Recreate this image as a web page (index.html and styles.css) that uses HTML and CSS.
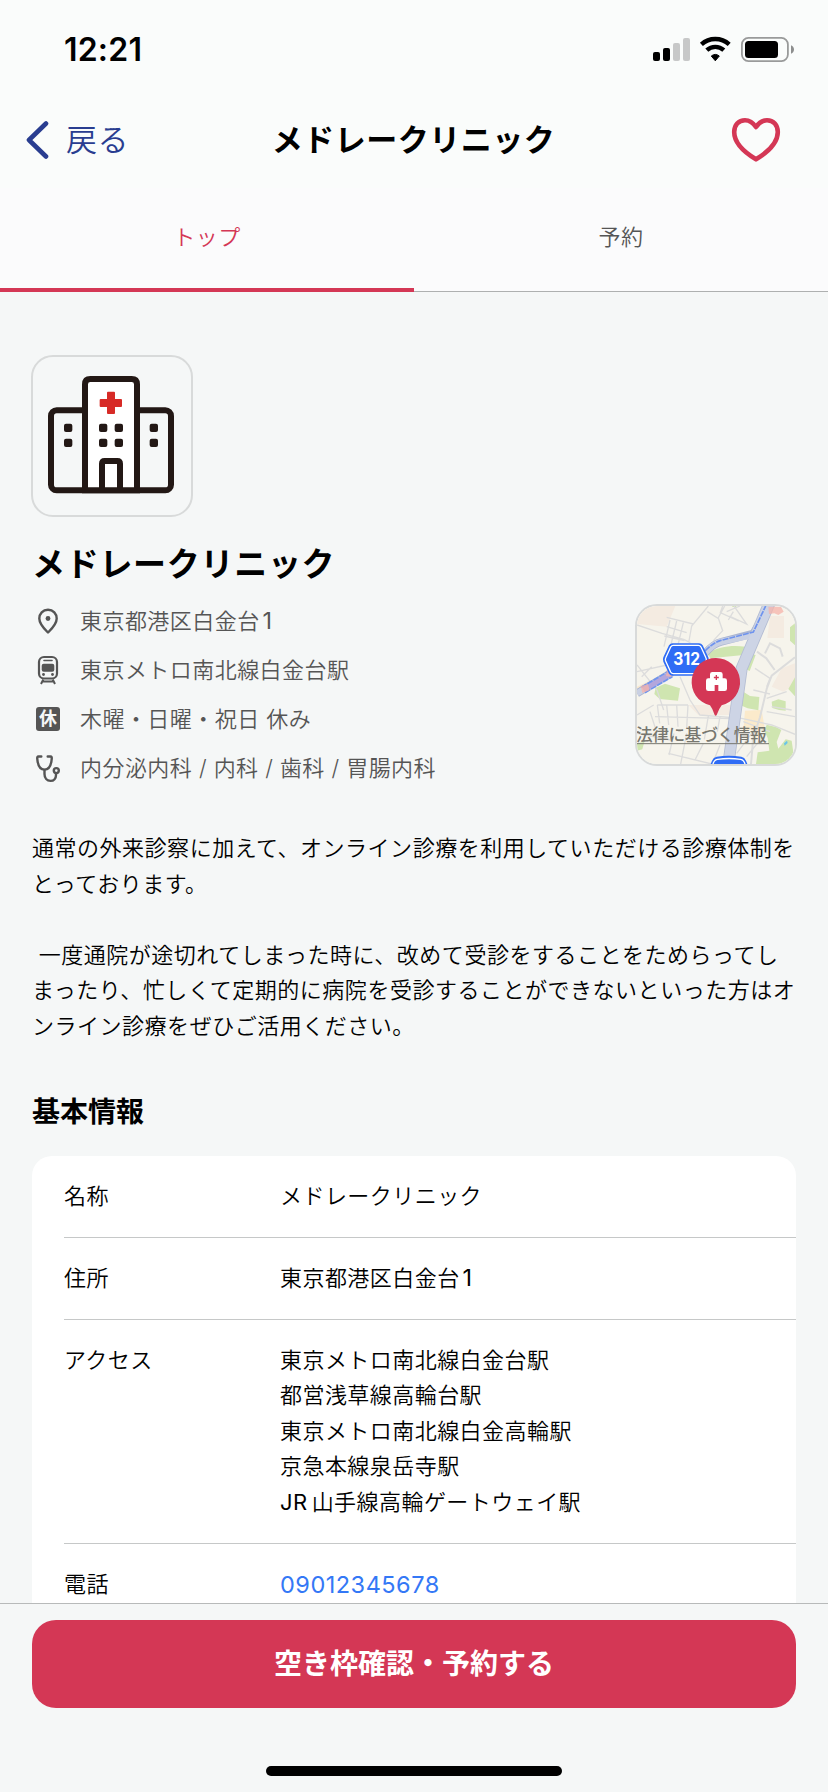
FILE: index.html
```html
<!DOCTYPE html>
<html lang="ja">
<head>
<meta charset="utf-8">
<title>メドレークリニック</title>
<link rel="stylesheet" href="styles.css">
</head>
<body>
<div class="screen">
  <header class="top">
    <div class="status">
      <span class="time">12:21</span>
      <svg class="status-icons" viewBox="0 0 144 28" width="144" height="28">
        <rect x="1" y="16" width="7" height="9" rx="2"/>
        <rect x="11" y="12" width="7" height="13" rx="2"/>
        <rect x="21" y="7" width="7" height="18" rx="2" fill="#c7c8c8"/>
        <rect x="31" y="2" width="7" height="23" rx="2" fill="#c7c8c8"/>
        <g fill="none" stroke="#000" stroke-width="4.400">
          <path d="M49.400 8.400a20.600 20.600 0 0 1 27.800 0"/>
          <path d="M54.800 14.200a12.600 12.600 0 0 1 17 0"/>
        </g>
        <path d="M59.300 20q4-3.200 8 0l-4 4.800z" stroke="#000" stroke-width="1" stroke-linejoin="round"/>
        <rect x="89.900" y="1.900" width="46" height="23.200" rx="6.500" fill="none" stroke="#999a9a" stroke-width="1.800"/>
        <rect x="93" y="5" width="33" height="17" rx="3.500"/>
        <path d="M139 9.200q3 1.400 3 4.300t-3 4.300z" fill="#8d8e8e"/>
      </svg>
    </div>
    <nav class="nav">
      <a class="back">
        <svg viewBox="0 0 24 40" width="24" height="40"><path d="M20 3.500 3 20l17 16.500" fill="none" stroke="#293d90" stroke-width="4.600" stroke-linecap="round" stroke-linejoin="round"/></svg>
        <span>戻る</span>
      </a>
      <h1 class="nav-title">メドレークリニック</h1>
      <svg class="heart" viewBox="0 0 50 46" width="50" height="46"><path d="M25 10C21.500 4.800 17.800 3.200 14 3.200 7.500 3.200 3.200 8.200 3.200 15c0 12 13 22 21.800 27.300C33.800 37 46.800 27 46.800 15 46.800 8.200 42.500 3.200 36 3.200c-3.800 0-7.500 1.600-11 6.800z" fill="none" stroke="#d43755" stroke-width="4.600" stroke-linejoin="round"/></svg>
    </nav>
    <div class="tabs">
      <div class="tab tab-active">トップ</div>
      <div class="tab">予約</div>
    </div>
  </header>

  <main class="content">
    <div class="logo">
      <svg viewBox="39 51 474 474" width="158" height="158">
        <g fill="none" stroke="#231815" stroke-width="18">
          <rect x="93" y="211" width="360" height="240" rx="17"/>
          <path d="M195 451V133q0-16 16-16h124q16 0 16 16v318z" fill="#fff"/>
          <path d="M246 450v-79q0-8 8-8h38q8 0 8 8v79"/>
        </g>
        <g fill="#231815">
          <rect x="132" y="251" width="25" height="25" rx="6"/><rect x="132" y="296" width="25" height="25" rx="6"/>
          <rect x="237" y="251" width="25" height="25" rx="6"/><rect x="237" y="296" width="25" height="25" rx="6"/>
          <rect x="284" y="251" width="25" height="25" rx="6"/><rect x="284" y="296" width="25" height="25" rx="6"/>
          <rect x="389" y="251" width="25" height="25" rx="6"/><rect x="389" y="296" width="25" height="25" rx="6"/>
        </g>
        <g fill="#d72a26"><rect x="261" y="155" width="24" height="67" rx="3"/><rect x="239" y="177" width="67" height="24" rx="3"/></g>
      </svg>
    </div>
    <h2 class="clinic-name">メドレークリニック</h2>

    <section class="summary">
      <ul class="facts">
        <li>
          <svg viewBox="0 0 30 30" width="30" height="30"><path d="M16 3.700c-5.200 0-8.700 4-8.700 8.800C7.300 18.300 12.500 23 16 26.500c3.500-3.500 8.700-8.200 8.700-14 0-4.800-3.500-8.800-8.700-8.800z" fill="none" stroke="#555" stroke-width="2.400" stroke-linejoin="round"/><circle cx="16" cy="12.500" r="2.400" fill="#555"/></svg>
          <span>東京都港区白金台<span class="latin">1</span></span>
        </li>
        <li>
          <svg viewBox="0 0 30 30" width="30" height="30"><rect x="7" y="2" width="18" height="21.500" rx="5" fill="none" stroke="#555" stroke-width="2.200"/><path d="M12 5.500h8" stroke="#555" stroke-width="1.600" stroke-linecap="round"/><rect x="9.700" y="8.700" width="12.600" height="8" rx="2" fill="#555"/><circle cx="11.500" cy="19.500" r="1.400" fill="#555"/><circle cx="20.500" cy="19.500" r="1.400" fill="#555"/><path d="M11.300 24.500 9 29M20.700 24.500 23 29M10 26.500h12" stroke="#555" stroke-width="2"/></svg>
          <span>東京メトロ南北線白金台駅</span>
        </li>
        <li>
          <span class="closed-badge">休</span>
          <span>木曜・日曜・祝日 休み</span>
        </li>
        <li>
          <svg viewBox="0 0 30 30" width="30" height="30"><g fill="none" stroke="#555" stroke-width="2.400" stroke-linecap="round" stroke-linejoin="round"><path d="M9.300 3.500H6.500Q5 3.500 5.300 6c.5 6 3 10.600 7.200 10.600s6.700-4.600 7.200-10.600q.3-2.500-1.200-2.500h-2.800"/><path d="M12.500 17v4c0 4.300 2.500 6.900 6 6.900s5.500-2.700 5.500-6v-1.400"/><circle cx="24.300" cy="17.600" r="2.500"/></g></svg>
          <span>内分泌内科 / 内科 / 歯科 / 胃腸内科</span>
        </li>
      </ul>
      <div class="map">
        <svg viewBox="51 48 474 474" width="158" height="158">
          <rect x="51" y="48" width="474" height="474" fill="#f6f4ec"/>
          <path d="M51 48h115l-26 62-89-8z" fill="#f4ebe1"/>
          <path d="M450 78h42v66h-50zM485 235l40-15v65l-35 20-35-15zM205 345h130v30H235z" fill="#f4ebe1"/>
          <path d="M51 290l85-40 10 15-95 48z" fill="#f8e8d0"/>
          <path d="M375 362l50-2 10 60-65 0zM395 415h30l-30 55z" fill="#fbeacb"/>
          <g fill="#cfe5b0">
            <path d="M262 190c35-22 75-25 115-20l-6 25-100 10z"/>
            <path d="M385 190l22 5-18 48-20-10zM370 305l20 13 28 3-3 40-32-6-18-8z"/>
            <path d="M107 293l28-12 45 14-6 37-55-5-16-15z"/>
            <path d="M455 335l20-7 22 6v28l-20-2-20-6zM525 100l-15 12v40l15 14zM525 262l-20 35 20 22z"/>
            <path d="M440 404l30 8 14 8-14 36 5 20 22-28 18 4 10 70H408l5-35 35-5-5-38-10-22zM51 460l22-4-6 22-16 4zM337 48h12v3h-12z"/>
          </g>
          <path d="M492 460l9-8 2 7-9 8z" fill="#68c5ea"/>
          <g fill="none" stroke="#dcdcdc" stroke-width="4">
            <path d="M51 105l75 25 65 18 20 10M265 48l-50 60-8 45M140 82l80 20M150 90l-18 80M170 93l-18 75M190 98l-18 75M140 110l60 18M133 138l60 14"/>
            <path d="M262 65l32 20 20-37M294 82l14 40-28 30M308 48l-7 20 55 25M328 78l52 24-38-54M340 65l-15 25M320 65l40-17"/>
            <path d="M411 185l28 20 25 35M435 190l15-30 30 15 8 25M525 202l-70 55-15 40-20 85-20 60-7 80" stroke-width="6"/>
            <path d="M51 225l60 75 20 60M51 245l90-20M65 260l30-30M180 260l30 70 30 45 125 10 90 20 70 28"/>
            <path d="M112 345l92 0M105 380l230 6M112 345l7 55M140 345l6 60M170 345l4 65M204 345l-4 70M51 375l50-30M90 365l18 55M265 378l-12 70M300 380l-8 45M162 430l-15 65M200 430l-18 92M145 490l130 32M250 460l-25 50M300 465l-20 50"/>
            <path d="M51 430l100 20M350 490l60-80M380 500l40-50M370 395l80 30M400 300l50 12M440 325l60-20M405 235l45 30-10 25M440 365l85 15M455 350l60 10"/>
          </g>
          <path d="M51 310 155 248M255 190Q280 160 305 155L400 130 455 40" fill="none" stroke="#aab4d1" stroke-width="23"/>
          <path d="M448 40 365 235 325 522" fill="none" stroke="#b4bdd3" stroke-width="36"/>
          <path d="M51 310 155 248M255 190Q280 160 305 155L400 135" fill="none" stroke="#c9d0e3" stroke-width="19"/>
          <path d="M448 40 365 235 325 522" fill="none" stroke="#cdd4e5" stroke-width="31"/>
          <path d="M70 299 155 250" stroke="#b3a6dc" stroke-width="16"/>
          <path d="M64 292l88-52M75 308l82-48M255 183Q280 158 300 152L400 126 437 48" fill="none" stroke="#6e93ee" stroke-width="5" stroke-dasharray="18 3"/>
          <path d="M62 288l22-5 5 18-22 8zM140 240l17 5-3 16-16-3zM445 50h38l8 15-16 10-12-5-16 2z" fill="#f5b3aa" opacity=".75"/>
          <path d="M158 160h79q7 0 11 6l17 36q3 7 0 13l-17 36q-4 6-11 6h-79q-7 0-11-6l-17-36q-3-6 0-13l17-36q4-6 11-6z" fill="#2f6cf5"/>
          <path d="M160 166h75q5 0 8 5l15 33q2 4 0 9l-15 33q-3 5-8 5h-75q-5 0-8-5l-15-33q-2-5 0-9l15-33q3-5 8-5z" fill="none" stroke="#fff" stroke-width="4"/>
          <text x="160" y="226" class="route" textLength="80" lengthAdjust="spacingAndGlyphs">312</text>
          <text x="48" y="454" class="legal" textLength="392">法律に基づく情報</text>
          <path d="M51 461h396" stroke="#77776f" stroke-width="3"/>
          <path d="M272 522l4-10q4-10 14-12 36-6 74 0 10 2 14 12l4 10z" fill="#2f6cf5"/>
          <path d="M279 522q3-12 13-14 35-5 70 0 10 2 13 14" fill="none" stroke="#fff" stroke-width="4"/>
          <path d="M288 204a72 72 0 0 1 17 142q-8 10-15 29-3 4-6 0-6-19-14-29a72 72 0 0 1 18-142z" fill="#d43755"/>
          <path d="M270 265v-12q0-7 7-7h24q7 0 7 7v12h6q7 0 7 7v24q0 7-7 7h-19v-18h-11v18h-19q-7 0-7-7v-24q0-7 7-7z" fill="#fff"/>
          <path d="M289 255v15M281.500 262.500h15" stroke="#d43755" stroke-width="4"/>
        </svg>
      </div>
    </section>

    <p class="intro">通常の外来診察に加えて、オンライン診療を利用していただける診療体制を<br>とっております。<br><br>&nbsp;一度通院が途切れてしまった時に、改めて受診をすることをためらってし<br>まったり、忙しくて定期的に病院を受診することができないといった方はオ<br>ンライン診療をぜひご活用ください。</p>

    <h3 class="section-title">基本情報</h3>
    <dl class="card">
      <div class="row"><dt>名称</dt><dd>メドレークリニック</dd></div>
      <div class="row"><dt>住所</dt><dd>東京都港区白金台<span class="latin">1</span></dd></div>
      <div class="row"><dt>アクセス</dt><dd>東京メトロ南北線白金台駅<br>都営浅草線高輪台駅<br>東京メトロ南北線白金高輪駅<br>京急本線泉岳寺駅<br><span class="jr">JR</span>山手線高輪ゲートウェイ駅</dd></div>
      <div class="row"><dt>電話</dt><dd class="phone">09012345678</dd></div>
    </dl>
  </main>

  <footer class="footer">
    <button class="cta">空き枠確認・予約する</button>
    <div class="home-bar"></div>
  </footer>
</div>
</body>
</html>
```
FILE: styles.css
```css
* { box-sizing: border-box; margin: 0; padding: 0; }
body {
  font-family: Inter, "Noto Sans CJK JP", sans-serif;
  font-size: 22px;
  letter-spacing: .45px;
  font-weight: 350;
  color: #000;
  background: #f5f7f7;
}
svg { display: block; flex: none; }
.screen { display: flex; flex-direction: column; height: 1792px; overflow: hidden; background: #f5f7f7; }

.top { flex: none; background: #fafcfb; }
.status { display: flex; justify-content: space-between; align-items: center; height: 88px; padding: 12px 32px 0 64px; }
.time { font-size: 32px; font-weight: 600; letter-spacing: .2px; line-height: 40px; }
.nav { display: grid; grid-template-columns: 1fr auto 1fr; align-items: center; height: 100px; padding: 4px 47px 0 26px; }
.back { display: flex; align-items: center; gap: 16px; font-size: 31px; color: #293d90; line-height: 40px; }
.nav-title { font-size: 31px; font-weight: 700; letter-spacing: .5px; line-height: 40px; margin-left: -21px; margin-right: -21px; transform: translateX(10px); }
.heart { justify-self: end; }
.tabs { display: flex; height: 104px; background: #fbfbfc; }
.tab { flex: 1; text-align: center; line-height: 98px; color: #555; border-bottom: 1px solid #aeb0b0; height: 104px; }
.tab-active { color: #d43755; border-bottom: 4px solid #d43755; }

.content { flex: 1; min-height: 0; overflow: hidden; padding: 63px 32px 0; }
.logo, .map { width: 162px; height: 162px; border: 2px solid #d8dada; border-radius: 22px; overflow: hidden; flex: none; }
.logo { margin-left: -1px; }
.clinic-name { font-size: 33px; letter-spacing: .7px; line-height: 44px; margin-top: 25px; }
.summary { display: flex; justify-content: space-between; margin: 10px -1px 0 0; }
.facts { list-style: none; color: #555; }
.facts li { display: flex; align-items: center; gap: 18px; height: 49px; line-height: 36px; white-space: nowrap; }
.facts li .closed-badge { width: 24px; height: 24px; margin: 0 2px 0 4px; border-radius: 3px; background: #555; color: #f5f7f7; font-size: 18px; line-height: 24px; font-weight: 700; text-align: center; letter-spacing: 0; }
.map { margin-top: 8px; }
.route { font: 700 52px Inter, sans-serif; letter-spacing: 0; fill: #fff; }
.legal { font: 500 50px "Noto Sans CJK JP", sans-serif; letter-spacing: 0; fill: #77776f; }
.intro { margin-top: 39px; height: 214px; line-height: 35.6px; letter-spacing: .52px; white-space: nowrap; }
.section-title { font-size: 28px; letter-spacing: 0; line-height: 40px; margin-top: 47px; }
.card { margin-top: 24px; padding-left: 32px; background: #fff; border-radius: 20px; height: 500px; }
.row { display: flex; padding: 22.75px 0; line-height: 35.5px; border-bottom: 1px solid #c6c8c8; }
dt { width: 216px; }
.latin { margin-left: 3px; font-size: 23.5px; font-weight: 400; line-height: 1; }
.jr { margin-right: 4px; font-weight: 400; }
.phone { color: #3478f6; font-size: 23.5px; font-weight: 400; letter-spacing: .5px; }

.footer { flex: none; height: 189px; border-top: 1px solid #b8baba; padding: 16px 32px 0; background: #f5f7f7; display: flex; flex-direction: column; align-items: center; }
.cta { width: 100%; height: 88px; border: 0; border-radius: 24px; background: #d43755; color: #fff; font: 600 28px/89px Inter, "Noto Sans CJK JP", sans-serif; letter-spacing: 0; }
.home-bar { width: 296px; height: 10px; border-radius: 5px; background: #000; margin-top: 58px; }
```
